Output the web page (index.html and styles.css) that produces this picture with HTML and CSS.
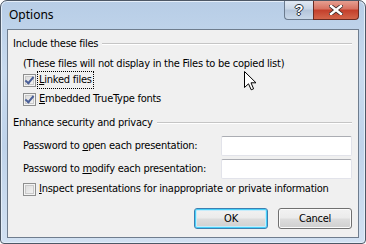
FILE: index.html
```html
<!DOCTYPE html>
<html lang="en">

<head>
    <meta charset="UTF-8">
    <title>Options</title>
    <link rel="stylesheet" href="styles.css">
</head>

<body>
    <div class="window">
        <div class="titlebar">
            <span class="title">Options</span>
            <div class="caption">
                <span class="cap-btn help">?</span>
                <span class="cap-btn close">
                    <svg width="14" height="10" viewBox="0 0 14 10">
                        <path d="M2 1 L12 9 M12 1 L2 9" stroke="#3a2a28" stroke-width="4" stroke-linecap="square" />
                        <path d="M2 1 L12 9 M12 1 L2 9" stroke="#fff" stroke-width="2.4" stroke-linecap="square" />
                    </svg>
                </span>
            </div>
        </div>

        <div class="client">
            <div class="group-head">
                <span>Include these files</span>
                <span class="rule"></span>
            </div>
            <div class="group-body">
                <div class="row note">(These files will not display in the Files to be copied list)</div>
                <div class="row check first">
                    <span class="box checked"></span>
                    <span class="focus"><u>L</u>inked files</span>
                </div>
                <div class="row check second">
                    <span class="box checked"></span>
                    <span><u>E</u>mbedded TrueType fonts</span>
                </div>
            </div>

            <div class="group-head second-head">
                <span>Enhance security and privacy</span>
                <span class="rule"></span>
            </div>
            <div class="group-body">
                <div class="row field">
                    <span>Password to <u>o</u>pen each presentation:</span>
                    <input type="text" class="textbox">
                </div>
                <div class="row field next">
                    <span>Password to <u>m</u>odify each presentation:</span>
                    <input type="text" class="textbox">
                </div>
                <div class="row check inspect">
                    <span class="box"></span>
                    <span><u>I</u>nspect presentations for inappropriate or private information</span>
                </div>
            </div>

            <div class="buttons">
                <span class="button default">OK</span>
                <span class="button">Cancel</span>
            </div>
        </div>

        <svg class="cursor" width="13" height="20" viewBox="0 0 13 20">
            <path d="M0.5 0.5 L0.5 16.5 L4.5 12.8 L7.2 18.8 L9.6 17.8 L7 11.8 L12 11.8 Z" fill="#fff" stroke="#000" stroke-width="1" />
        </svg>
    </div>
</body>

</html>
```

FILE: styles.css
```css
body {
    margin: 0;
    padding: 0;
    background: #fff;
    font-family: "DejaVu Sans Condensed", "Liberation Sans", sans-serif;
    font-size: 11px;
    letter-spacing: -0.25px;
    color: #000;
}

.window {
    position: relative;
    box-sizing: border-box;
    width: 366px;
    height: 244px;
    display: flex;
    flex-direction: column;
    border: 1px solid #4d5866;
    border-radius: 7px 7px 4px 4px;
    background: linear-gradient(to bottom, #b7cde6 0%, #c9dbef 30%, #bfd3ea 60%, #d2e1f2 100%);
    box-shadow: inset 0 0 0 1px #e4eef9;
    overflow: hidden;
}

.titlebar {
    height: 28px;
    display: flex;
    justify-content: space-between;
    padding: 0 6px 0 8px;
}

.title {
    font-family: "Noto Sans", "Open Sans", sans-serif;
    font-size: 12px;
    letter-spacing: 0;
    line-height: 28px;
    color: #000;
}

.caption {
    display: flex;
    margin-top: -1px;
    height: 20px;
}

.cap-btn {
    box-sizing: border-box;
    height: 20px;
    display: flex;
    align-items: center;
    justify-content: center;
    border: 1px solid #6b7b8e;
    border-top: none;
}

.help {
    width: 29px;
    border-radius: 0 0 0 4px;
    border-right: none;
    background: linear-gradient(to bottom, #e3ebf5 0%, #cad7e6 45%, #b4c5da 55%, #c9d8e9 100%);
    color: #fff;
    font-family: "Liberation Sans", sans-serif;
    font-weight: bold;
    font-size: 14px;
    text-shadow: 0 0 1px #2c3540, 1px 0 0 #2c3540, -1px 0 0 #2c3540, 0 1px 0 #2c3540, 0 -1px 0 #2c3540;
}

.close {
    width: 46px;
    border-radius: 0 0 4px 0;
    border-color: #6b2b22;
    background: linear-gradient(to bottom, #e8a597 0%, #d87463 45%, #c4402c 55%, #d3654a 100%);
}

.client {
    flex: 1;
    margin: 0 6px 5px 6px;
    background: #f0f0f0;
    border: 1px solid #6f7d8e;
    padding: 6px 6px 0 5px;
    display: flex;
    flex-direction: column;
}

.group-head {
    display: flex;
    align-items: center;
    height: 16px;
    line-height: 16px;
}

.second-head {
    margin-top: 8px;
}

.rule {
    flex: 1;
    margin-left: 4px;
    border-top: 1px solid #c5c5c5;
    border-bottom: 1px solid #fff;
}

.group-body {
    padding-left: 10px;
}

.row {
    display: flex;
    align-items: center;
    height: 16px;
    line-height: 16px;
    white-space: nowrap;
}

.note {
    margin-top: 4px;
}

.check.second {
    margin-top: 3px;
}

.box {
    box-sizing: border-box;
    width: 13px;
    height: 13px;
    margin-right: 3px;
    border: 1px solid #8e8f8f;
    background: linear-gradient(135deg, #d8d8d8, #f7f7f7);
    box-shadow: inset 0 0 0 1px #f4f4f4, inset 0 0 0 2px #c9c9c9;
    position: relative;
}

.box.checked::after {
    content: "";
    position: absolute;
    left: 3px;
    top: 0px;
    width: 3px;
    height: 7px;
    border-right: 2px solid #4a5f97;
    border-bottom: 2px solid #4a5f97;
    transform: rotate(40deg);
}

.focus {
    outline: 1px dotted #000;
    outline-offset: 0;
    padding: 0 1px;
    margin-left: -1px;
}

.field {
    height: 20px;
    justify-content: space-between;
    margin-top: 5px;
}

.field.next {
    margin-top: 3px;
}

.textbox {
    box-sizing: border-box;
    width: 131px;
    height: 20px;
    margin: 0;
    padding: 0;
    border: 1px solid #e2e3ea;
    border-top-color: #abadb3;
    border-radius: 2px;
    background: #fff;
}

.inspect {
    margin-top: 2px;
}

.buttons {
    display: flex;
    justify-content: flex-end;
    gap: 10px;
    margin-top: 11px;
}

.button {
    box-sizing: border-box;
    width: 74px;
    height: 21px;
    display: flex;
    align-items: center;
    justify-content: center;
    border: 1px solid #707070;
    border-radius: 3px;
    background: linear-gradient(to bottom, #f2f2f2 0%, #ebebeb 48%, #dddddd 52%, #cfcfcf 100%);
    box-shadow: inset 0 0 0 1px #fbfbfb;
}

.button.default {
    border-color: #3c7fb1;
    box-shadow: inset 0 0 0 1px #48d1fa, inset 0 0 0 2px #c6ecfb;
}

.cursor {
    position: absolute;
    left: 243px;
    top: 70px;
}
```
